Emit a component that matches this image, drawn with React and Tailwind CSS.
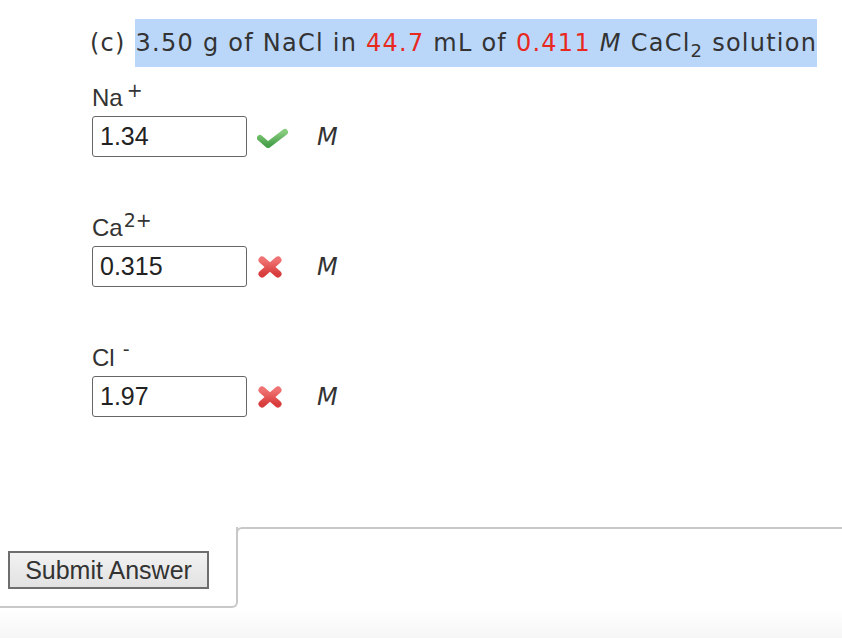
import React from 'react';

const sans = { fontFamily: '"Liberation Sans", Arial, sans-serif' };
const verdana = { fontFamily: '"DejaVu Sans", Verdana, sans-serif' };

function Check() {
  return (
    <svg width="32" height="22" viewBox="0 0 32 22">
      <defs>
        <linearGradient id="g" x1="0" y1="0" x2="0" y2="1">
          <stop offset="0" stopColor="#86cc7c" />
          <stop offset="1" stopColor="#47a04a" />
        </linearGradient>
      </defs>
      <polyline
        points="3,12 11,19 28,6"
        fill="none"
        stroke="url(#g)"
        strokeWidth="6"
        strokeLinecap="round"
        strokeLinejoin="round"
      />
    </svg>
  );
}

function Cross() {
  return (
    <svg width="26" height="24" viewBox="0 0 26 24">
      <defs>
        <linearGradient id="r" x1="0" y1="0" x2="0" y2="1">
          <stop offset="0" stopColor="#f07272" />
          <stop offset="1" stopColor="#d83c3c" />
        </linearGradient>
      </defs>
      <g stroke="url(#r)" strokeWidth="7" strokeLinecap="round">
        <line x1="5" y1="5" x2="21" y2="19" />
        <line x1="21" y1="5" x2="5" y2="19" />
      </g>
    </svg>
  );
}

function Answer({ label, sup, supClass, value, ok }) {
  return (
    <div className="flex flex-col">
      <div className="h-[28px] leading-[28px] text-[24px] text-[#333]" style={sans}>
        {label}
        <span className={`text-[19px] relative ${supClass}`} style={verdana}>{sup}</span>
      </div>
      <div className="flex items-center mt-[4px]">
        <div
          className="w-[155px] h-[41px] border border-[#666] rounded-[3px] pl-[7px] flex items-center text-[25px] text-[#222]"
          style={sans}
        >
          {value}
        </div>
        <div className="w-[70px] flex items-center pl-[10px]">{ok ? <Check /> : <Cross />}</div>
        <span className="italic text-[24px] text-[#333]" style={verdana}>M</span>
      </div>
    </div>
  );
}

export default function App() {
  return (
    <div className="w-[842px] h-[638px] bg-white flex flex-col overflow-hidden">
      <div
        className="pl-[90px] pt-[19px] flex items-center text-[24px] text-[#333] leading-[48px] tracking-[1.25px]"
        style={verdana}
      >
        <span>(c)&nbsp;</span>
        <span className="bg-[#bad7fa] h-[48px] pl-[1px]">
          3.50 g of NaCl in <span className="text-[#e8291f]">44.7</span> mL of{' '}
          <span className="text-[#e8291f]">0.411</span> <i>M</i> CaCl
          <span className="text-[18px] relative top-[6px]">2</span> solution
        </span>
      </div>

      <div className="pl-[92px] flex flex-col gap-[57px] mt-[17px]">
        <Answer label="Na" sup="+" supClass="-top-[9px] ml-[4px]" value="1.34" ok />
        <Answer label="Ca" sup="2+" supClass="-top-[9px] ml-[1px]" value="0.315" />
        <Answer label="Cl" sup="-" supClass="-top-[10px] ml-[8px]" value="1.97" />
      </div>

      <div className="flex items-start mt-[110px]">
        <div className="w-[238px] h-[81px] border-r-2 border-b-2 border-[#c8c8c8] rounded-br-[6px] pl-[8px] pt-[24px]">
          <button
            className="w-[201px] h-[38px] border-2 border-[#6e6e6e] bg-gradient-to-b from-[#f2f2f2] to-[#e2e2e2] text-[25px] text-[#333] leading-none"
            style={sans}
          >
            Submit Answer
          </button>
        </div>
        <div className="flex-1 h-[10px] border-t-2 border-l-2 border-[#c8c8c8] rounded-tl-[6px] -ml-[2px]" />
      </div>
      <div className="flex-1 bg-gradient-to-b from-white to-[#f6f6f6]" />
    </div>
  );
}
